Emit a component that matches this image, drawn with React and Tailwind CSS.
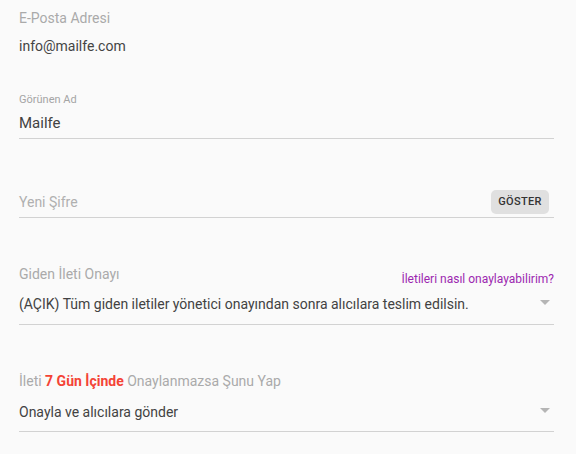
import React from 'react';

const Arrow = () => (
  <svg width="10" height="5" viewBox="0 0 10 5" className="shrink-0">
    <path d="M0 0 L10 0 L5 5 Z" fill="#b5b5b5" />
  </svg>
);

const App = () => {
  return (
    <div className="w-[576px] h-[454px] bg-[#fafafa] overflow-hidden font-['Roboto',sans-serif] text-[#424242]">
      <div className="pl-[19px] pr-[22px] pt-[9px] flex flex-col">
        {/* E-posta */}
        <div className="text-[14px] leading-[18px] text-[#aaa]">E-Posta Adresi</div>
        <div className="text-[14px] leading-[18px] mt-[10px] text-[#444]">info@mailfe.com</div>

        {/* Görünen Ad */}
        <div className="mt-[38px] text-[11px] leading-[14px] text-[#a5a5a5]">Görünen Ad</div>
        <div className="mt-[7px] pb-[6px] border-b border-[#d2d2d2] text-[15px] leading-[18px] text-[#424242]">Mailfe</div>

        {/* Yeni Şifre */}
        <div className="mt-[51px] flex items-center justify-between pb-[3px] border-b border-[#d2d2d2]">
          <span className="text-[14px] leading-[18px] text-[#b0b0b0]">Yeni Şifre</span>
          <button className="mr-[5px] h-[24px] w-[58px] rounded-[5px] bg-[#e0e0e0] text-[11px] font-medium tracking-[0.3px] text-[#333]">GÖSTER</button>
        </div>

        {/* Giden İleti Onayı */}
        <div className="mt-[47px] flex items-end justify-between">
          <span className="text-[14px] leading-[18px] text-[#aaa]">Giden İleti Onayı</span>
          <span className="text-[12px] leading-[15px] text-[#9c27b0] -mb-[4px]">İletileri nasıl onaylayabilirim?</span>
        </div>
        <div className="mt-[12px] pb-[11px] border-b border-[#d2d2d2] flex items-center justify-between">
          <span className="text-[14px] leading-[18px] text-[#424242]">(AÇIK) Tüm giden iletiler yönetici onayından sonra alıcılara teslim edilsin.</span>
          <span className="mr-[4px] -mt-[4px]"><Arrow /></span>
        </div>

        {/* Onaylanmazsa */}
        <div className="mt-[47px] text-[14px] leading-[18px] text-[#aaa]">
          İleti <span className="font-bold text-[#f44336]">7 Gün İçinde</span> Onaylanmazsa Şunu Yap
        </div>
        <div className="mt-[13px] pb-[10px] border-b border-[#d2d2d2] flex items-center justify-between">
          <span className="text-[14px] leading-[18px] text-[#424242]">Onayla ve alıcılara gönder</span>
          <span className="mr-[4px] -mt-[4px]"><Arrow /></span>
        </div>
      </div>
    </div>
  );
};

export default App;
